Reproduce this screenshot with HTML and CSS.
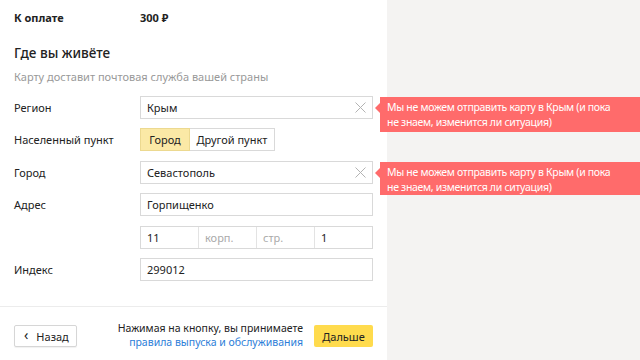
FILE: index.html
```html
<!DOCTYPE html>
<html lang="ru">
<head>
<meta charset="utf-8">
<link rel="stylesheet" href="styles.css">
</head>
<body>
<div class="page">
  <div class="panel">
    <div class="pay">
      <span class="pay-label">К оплате</span>
      <span class="pay-sum">300 ₽</span>
    </div>
    <h2 class="title">Где вы живёте</h2>
    <p class="subtitle">Карту доставит почтовая служба вашей страны</p>
    <div class="form">
      <div class="row">
        <span class="label">Регион</span>
        <div class="input"><span>Крым</span>
          <svg class="clear" width="11" height="11" viewBox="0 0 11 11"><path d="M0.5 0.5L10.5 10.5M10.5 0.5L0.5 10.5" stroke="#b3b3b3" stroke-width="1"/></svg>
        </div>
      </div>
      <div class="row">
        <span class="label">Населенный пункт</span>
        <div class="toggle">
          <span class="tbtn on">Город</span>
          <span class="tbtn">Другой пункт</span>
        </div>
      </div>
      <div class="row">
        <span class="label">Город</span>
        <div class="input"><span>Севастополь</span>
          <svg class="clear" width="11" height="11" viewBox="0 0 11 11"><path d="M0.5 0.5L10.5 10.5M10.5 0.5L0.5 10.5" stroke="#b3b3b3" stroke-width="1"/></svg>
        </div>
      </div>
      <div class="row">
        <span class="label">Адрес</span>
        <div class="input"><span>Горпищенко</span></div>
      </div>
      <div class="row">
        <span class="label"></span>
        <div class="cells">
          <span class="cell">11</span>
          <span class="cell ph">корп.</span>
          <span class="cell ph">стр.</span>
          <span class="cell">1</span>
        </div>
      </div>
      <div class="row">
        <span class="label">Индекс</span>
        <div class="input"><span>299012</span></div>
      </div>
    </div>
    <div class="footer">
      <button class="back"><span class="chev">‹</span>Назад</button>
      <div class="terms">
        <div>Нажимая на кнопку, вы принимаете</div>
        <a class="link">правила выпуска и обслуживания</a>
      </div>
      <button class="next">Дальше</button>
    </div>
  </div>
  <div class="tip tip1">Мы не можем отправить карту в Крым (и пока<br>не знаем, изменится ли ситуация)</div>
  <div class="tip tip2">Мы не можем отправить карту в Крым (и пока<br>не знаем, изменится ли ситуация)</div>
</div>
</body>
</html>
```
FILE: styles.css
```css
* { box-sizing: border-box; }
html, body { margin: 0; padding: 0; }
body {
  width: 640px; height: 360px; overflow: hidden;
  background: #f4f3f2;
  font-family: "Noto Sans", "Open Sans", sans-serif;
  font-size: 11px;
  color: #222;
}
.page { position: relative; width: 640px; height: 360px; }
.panel {
  width: 387px; height: 360px; background: #fff;
  display: flex; flex-direction: column;
}
.pay { display: flex; padding: 10px 0 0 14px; height: 26px; font-weight: 700; font-size: 11px; line-height: 15px; }
.pay-label { width: 126px; }
.title { margin: 18px 0 0 14px; font-size: 13.5px; font-weight: 500; line-height: 18px; }
.subtitle { margin: 7px 0 0 14px; color: #999; font-size: 11px; line-height: 15px; }
.form { margin-top: 12px; display: flex; flex-direction: column; gap: 9.5px; }
.row { display: flex; align-items: center; height: 23px; }
.label { width: 140px; padding-left: 14px; }
.input {
  width: 233px; height: 23px; border: 1px solid #d9d9d9;
  display: flex; align-items: center; justify-content: space-between;
  padding: 0 6px 0 6px;
}
.toggle { display: flex; height: 23px; white-space: nowrap; }
.tbtn {
  display: flex; align-items: center; justify-content: center;
  border: 1px solid #d9d9d9; height: 23px;
}
.tbtn.on { background: #fbe9a6; border-color: #ecd990; width: 50px; }
.tbtn + .tbtn { border-left: none; width: 85px; }
.cells { display: flex; width: 233px; height: 23px; border: 1px solid #d9d9d9; }
.cell { flex: 1; display: flex; align-items: center; padding-left: 6px; }
.cell + .cell { border-left: 1px solid #e3e3e3; }
.cell.ph { color: #aaa; }
.footer {
  margin-top: 25px; border-top: 1px solid #ececec;
  display: flex; align-items: center; padding: 5px 14px 0 14px; height: 54px;
}
.back {
  width: 63px; height: 22px; background: #fff; border: 1px solid #d6d6d6; border-radius: 2px;
  font: inherit; font-size: 11px; color: #222; display: flex; align-items: center; padding: 0 0 0 9px;
  box-shadow: 0 1px 1px rgba(0,0,0,0.06);
}
.chev { font-size: 14px; margin-right: 8px; line-height: 14px; margin-top: -2px; }
.terms { flex: 1; text-align: right; font-size: 10.5px; line-height: 14px; padding-right: 11px; margin-top: -2px; }
.link { color: #2b7dd8; }
.next {
  width: 59px; height: 22px; background: #ffdb4d; border: none; border-radius: 2px;
  font: inherit; font-size: 11px; color: #222;
}
.tip {
  position: absolute; left: 380px; width: 260px; height: 35px;
  background: #ff6b6b; color: #fff; font-size: 10.5px; line-height: 15px;
  padding: 3px 0 0 7px; white-space: nowrap; letter-spacing: -0.3px;
}
.tip::before {
  content: ""; position: absolute; left: -5px; top: 6px;
  border-top: 5px solid transparent; border-bottom: 5px solid transparent; border-right: 5px solid #ff6b6b;
}
.tip1 { top: 97px; }
.tip2 { top: 162px; height: 33px; }
```
